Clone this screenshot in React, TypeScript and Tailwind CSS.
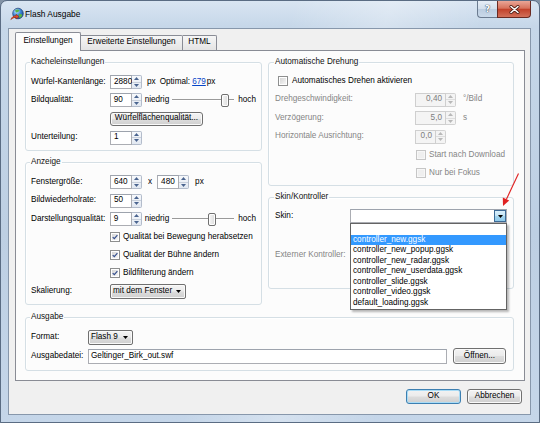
import React from "react";

const BTN_BG = "bg-[linear-gradient(#f3f3f3_0%,#ebebeb_48%,#dddddd_52%,#cfcfcf_100%)]";

function UpTri({ color }: { color: string }) {
  return (
    <svg width="5" height="3" viewBox="0 0 5 3">
      <path d="M0 3L2.5 0L5 3Z" fill={color} />
    </svg>
  );
}
function DownTri({ color = "#000" }: { color?: string }) {
  return (
    <svg width="5" height="3" viewBox="0 0 5 3">
      <path d="M0 0H5L2.5 3Z" fill={color} />
    </svg>
  );
}

function SpinArrows({ disabled }: { disabled?: boolean }) {
  const c = disabled ? "#b8b8b8" : "#4a648f";
  return (
    <div
      className={`w-[10px] h-full flex flex-col border border-l-0 rounded-r-[2px] ${
        disabled
          ? "border-[#d2d2d2] bg-[#f4f4f4]"
          : "border-[#b3bccb] bg-[linear-gradient(#f7f9fc,#e2e8f1)]"
      }`}
    >
      <div className="flex-1 flex items-center justify-center">
        <UpTri color={c} />
      </div>
      <div className={`h-px ${disabled ? "bg-[#dedede]" : "bg-[#c8d0dc]"}`} />
      <div className="flex-1 flex items-center justify-center">
        <DownTri color={c} />
      </div>
    </div>
  );
}

function Spin({
  value,
  w,
  disabled,
  right,
}: {
  value: string;
  w: string;
  disabled?: boolean;
  right?: boolean;
}) {
  return (
    <div className="flex h-[14px] shrink-0">
      <div
        className={`${w} h-full border flex items-center ${right ? "justify-end pr-[3px]" : "pl-[3px]"} ${
          disabled
            ? "border-[#cfcfcf] bg-[#f4f4f4] text-[#7d7d7d]"
            : "border-[#abadb3] border-t-[#9da3ad] bg-white"
        }`}
      >
        {value}
      </div>
      <SpinArrows disabled={disabled} />
    </div>
  );
}

function Check({ checked, disabled }: { checked?: boolean; disabled?: boolean }) {
  return (
    <div
      className={`w-[10px] h-[10px] shrink-0 border p-px ${
        disabled ? "border-[#c6c6c6] bg-[#f7f7f7]" : "border-[#8e8f8f] bg-white"
      }`}
    >
      <div
        className={`w-full h-full flex items-center justify-center ${
          disabled ? "bg-[#efefef]" : "bg-[linear-gradient(135deg,#d6d6d6,#f6f6f6)]"
        }`}
      >
        {checked && (
          <svg width="7" height="6" viewBox="0 0 7 6">
            <path d="M0.8 3.1L2.7 5L6.3 0.7" stroke="#36508e" strokeWidth="1.4" fill="none" />
          </svg>
        )}
      </div>
    </div>
  );
}

function Slider({ left }: { left: string }) {
  return (
    <div className="w-[62px] h-[14px] flex items-center shrink-0">
      <div className={`${left} h-[2px] border-t border-[#9a9a9a] bg-white`} />
      <div className="w-[8px] h-[13px] shrink-0 rounded-[2px] border border-[#707070] bg-[linear-gradient(90deg,#f6f6f6,#dcdcdc)] shadow-[inset_0_0_0_1px_#fdfdfd]" />
      <div className="flex-1 h-[2px] border-t border-[#9a9a9a] bg-white" />
    </div>
  );
}

function Select({ value, w }: { value: string; w: string }) {
  return (
    <div
      className={`${w} h-[15px] shrink-0 border border-[#707070] rounded-[2px] ${BTN_BG} shadow-[inset_0_0_0_1px_#f9f9f9] flex items-center pl-[2px] pr-[4px]`}
    >
      <span className="flex-1 whitespace-nowrap">{value}</span>
      <span className="ml-[3px] flex">
        <DownTri />
      </span>
    </div>
  );
}

function Button({ label, w, h, focus }: { label: string; w: string; h: string; focus?: boolean }) {
  return (
    <div
      className={`${w} ${h} shrink-0 border rounded-[3px] ${BTN_BG} flex items-center justify-center ${
        focus
          ? "border-[#3c7fb1] shadow-[inset_0_0_0_1px_#a9dcf6]"
          : "border-[#707070] shadow-[inset_0_0_0_1px_#fafafa]"
      }`}
    >
      {label}
    </div>
  );
}

function Group({
  title,
  children,
  cls,
}: {
  title: string;
  children: React.ReactNode;
  cls: string;
}) {
  return (
    <fieldset className={`min-w-0 border border-[#d5dfe5] rounded-[3px] shadow-[inset_1px_1px_0_#ffffff] ${cls}`}>
      <legend className="-ml-px px-[1px] h-[10px] leading-[10px] text-[#111111]">{title}</legend>
      {children}
    </fieldset>
  );
}

function AppIcon() {
  return (
    <svg width="14" height="14" viewBox="0 0 14 14">
      <defs>
        <radialGradient id="gl" cx="0.35" cy="0.3" r="0.8">
          <stop offset="0" stopColor="#bfe3ff" />
          <stop offset="0.5" stopColor="#3b86d6" />
          <stop offset="1" stopColor="#173f86" />
        </radialGradient>
      </defs>
      <circle cx="8" cy="6.5" r="5.3" fill="url(#gl)" stroke="#1b3c74" strokeWidth="0.7" />
      <path d="M5 3.6C6.4 2.2 8.2 2 9.6 3.2C9 4.6 7.6 5.3 6.2 5.4C5.6 5 5.2 4.4 5 3.6Z" fill="#58b546" />
      <path d="M8.6 7.3C10 6.8 11.6 7.1 12.4 7.9C11.8 9.6 10.6 10.8 9.5 11C9.4 9.8 8.9 8.6 8.6 7.3Z" fill="#58b546" />
      <path d="M0.8 12.6C2 9.8 3.8 8.6 6.2 8.6L6 7.2L9 9.6L6.2 12L6.1 10.4C4.2 10.4 2.5 11.2 0.8 12.6Z" fill="#e0502b" stroke="#8a2410" strokeWidth="0.5" />
    </svg>
  );
}

function RedArrow() {
  return (
    <svg className="absolute left-[498px] top-[170px] pointer-events-none" width="26" height="40" viewBox="0 0 26 40">
      <line x1="20.5" y1="3.5" x2="8.3" y2="29.5" stroke="#e02222" strokeWidth="1.1" />
      <path d="M5 36L4.8 27.6L11.2 30.6Z" fill="#e02222" />
    </svg>
  );
}

const items = [
  "controller_new.ggsk",
  "controller_new_popup.ggsk",
  "controller_new_radar.ggsk",
  "controller_new_userdata.ggsk",
  "controller_slide.ggsk",
  "controller_video.ggsk",
  "default_loading.ggsk",
];

export default function App() {
  const grey = "text-[#858585]";
  return (
    <div className="relative w-[540px] h-[423px] overflow-hidden bg-[#8393a6] font-['Liberation_Sans',Arial,sans-serif] text-[8.2px] leading-none text-black">
      <div className="w-full h-full flex flex-col rounded-t-[7px] border border-[#5a6c83] bg-[linear-gradient(105deg,rgba(255,255,255,0)_45%,rgba(255,255,255,0.28)_60%,rgba(255,255,255,0)_75%),linear-gradient(180deg,#d9e5f2_0%,#c6d7e9_6%,#bdcfe3_55%,#c5d6e9_100%)]">
        {/* title bar */}
        <div className="h-[27px] shrink-0 flex items-start">
          <div className="ml-[9px] mt-[6px]">
            <AppIcon />
          </div>
          <div className="ml-[1px] mt-[9px] text-[8.4px]">Flash Ausgabe</div>
          <div className="ml-auto mr-[8px] flex h-[17px]">
            <div className="w-[20px] h-full border border-r-0 border-t-0 border-[#6b7b90] rounded-bl-[4px] bg-[linear-gradient(#e6edf6_0%,#d3dfec_48%,#bccde0_52%,#cad9ea_100%)] flex items-center justify-center">
              <span className="font-['DejaVu_Sans',sans-serif] font-bold text-[9px] text-white [text-shadow:0_0_1px_#2d3e55,0_0_1px_#2d3e55]">?</span>
            </div>
            <div className="w-[34px] h-full border border-t-0 border-[#6a2a22] rounded-br-[4px] bg-[linear-gradient(#eaa697_0%,#d7725c_45%,#c2422b_52%,#d2705a_100%)] flex items-center justify-center">
              <svg width="11" height="9" viewBox="0 0 11 9">
                <path d="M2 1.5L9 7.5M9 1.5L2 7.5" stroke="#4a1a12" strokeWidth="3" strokeLinecap="round" />
                <path d="M2 1.5L9 7.5M9 1.5L2 7.5" stroke="#ffffff" strokeWidth="1.6" strokeLinecap="round" />
              </svg>
            </div>
          </div>
        </div>

        {/* client */}
        <div className="flex-1 ml-[7px] mr-[8px] mb-[7px] border border-[#8797ab] bg-[#f0f0f0] flex flex-col">
          {/* tabs */}
          <div className="mt-[3px] ml-[6px] h-[18px] flex items-start">
            <div className="relative z-10 w-[66px] h-[19px] border border-b-0 border-[#898c95] rounded-t-[2px] bg-[#fcfcfc] flex items-center justify-center pb-[2px]">
              Einstellungen
            </div>
            <div className="mt-[3px] w-[102px] h-[15px] border border-l-0 border-b-0 border-[#898c95] rounded-tr-[2px] bg-[linear-gradient(#f6f6f6,#e4e4e4)] flex items-center justify-center pb-[1px]">
              Erweiterte Einstellungen
            </div>
            <div className="mt-[3px] w-[34px] h-[15px] border border-l-0 border-b-0 border-[#898c95] rounded-tr-[2px] bg-[linear-gradient(#f6f6f6,#e4e4e4)] flex items-center justify-center pb-[1px]">
              HTML
            </div>
          </div>

          {/* panel */}
          <div className="ml-[6px] w-[510px] h-[331px] border border-[#898c95] bg-[#fcfcfc] pt-[6px] pl-[9px] pr-[10px] flex flex-col">
            <div className="flex gap-[6px] items-start">
              {/* left column */}
              <div className="w-[237px] flex flex-col gap-[6px]">
                <Group title="Kacheleinstellungen" cls="px-[5px] pb-[3px]">
                  <div className="pt-[6px]">
                    <div className="h-[18px] flex items-center">
                      <div className="w-[79px]">Würfel-Kantenlänge:</div>
                      <Spin value="2880" w="w-[22px]" />
                      <span className="ml-[5px]">px</span>
                      <span className="ml-[4px]">Optimal:</span>
                      <span className="ml-[2px] text-[#0645c8] underline">679</span>
                      <span className="ml-[1px]">px</span>
                    </div>
                    <div className="h-[18px] flex items-center">
                      <div className="w-[79px]">Bildqualität:</div>
                      <Spin value="90" w="w-[22px]" />
                      <span className="ml-[3px]">niedrig</span>
                      <div className="ml-[3px]">
                        <Slider left="w-[49px]" />
                      </div>
                      <span className="ml-[4px]">hoch</span>
                    </div>
                    <div className="h-[19px] flex items-center">
                      <div className="w-[79px]" />
                      <Button label="Würfelflächenqualität..." w="w-[93px]" h="h-[14px]" />
                    </div>
                    <div className="h-[19px] flex items-center">
                      <div className="w-[79px]">Unterteilung:</div>
                      <Spin value="1" w="w-[22px]" />
                    </div>
                  </div>
                </Group>

                <Group title="Anzeige" cls="px-[5px] pb-[3px]">
                  <div className="pt-[6px]">
                    <div className="h-[18px] flex items-center">
                      <div className="w-[79px]">Fenstergröße:</div>
                      <Spin value="640" w="w-[22px]" />
                      <span className="ml-[6px]">x</span>
                      <div className="ml-[5px]">
                        <Spin value="480" w="w-[22px]" />
                      </div>
                      <span className="ml-[6px]">px</span>
                    </div>
                    <div className="h-[19px] flex items-center">
                      <div className="w-[79px]">Bildwiederholrate:</div>
                      <Spin value="50" w="w-[22px]" />
                    </div>
                    <div className="h-[18px] flex items-center">
                      <div className="w-[79px]">Darstellungsqualität:</div>
                      <Spin value="9" w="w-[22px]" />
                      <span className="ml-[3px]">niedrig</span>
                      <div className="ml-[3px]">
                        <Slider left="w-[36px]" />
                      </div>
                      <span className="ml-[4px]">hoch</span>
                    </div>
                    <div className="h-[18px] flex items-center">
                      <div className="w-[79px]" />
                      <Check checked />
                      <span className="ml-[3px]">Qualität bei Bewegung herabsetzen</span>
                    </div>
                    <div className="h-[18px] flex items-center">
                      <div className="w-[79px]" />
                      <Check checked />
                      <span className="ml-[3px]">Qualität der Bühne ändern</span>
                    </div>
                    <div className="h-[18px] flex items-center">
                      <div className="w-[79px]" />
                      <Check checked />
                      <span className="ml-[3px]">Bildfilterung ändern</span>
                    </div>
                    <div className="h-[19px] flex items-center">
                      <div className="w-[79px]">Skalierung:</div>
                      <Select value="mit dem Fenster" w="w-[76px]" />
                    </div>
                  </div>
                </Group>
              </div>

              {/* right column */}
              <div className="w-[247px] flex flex-col gap-[6px]">
                <Group title="Automatische Drehung" cls="pl-[6px] pr-[5px] pb-[3px]">
                  <div className="pt-[5px]">
                    <div className="h-[18px] flex items-center">
                      <div className="ml-[3px]">
                        <Check />
                      </div>
                      <span className="ml-[4px]">Automatisches Drehen aktivieren</span>
                    </div>
                    <div className={`h-[19px] flex items-center ${grey}`}>
                      <div className="w-[140px]">Drehgeschwindigkeit:</div>
                      <Spin value="0,40" w="w-[31px]" disabled right />
                      <span className="ml-[7px]">°/Bild</span>
                    </div>
                    <div className={`h-[18px] flex items-center ${grey}`}>
                      <div className="w-[140px]">Verzögerung:</div>
                      <Spin value="5,0" w="w-[31px]" disabled right />
                      <span className="ml-[7px]">s</span>
                    </div>
                    <div className={`h-[19px] flex items-center ${grey}`}>
                      <div className="w-[140px]">Horizontale Ausrichtung:</div>
                      <Spin value="0,0" w="w-[21px]" disabled right />
                    </div>
                    <div className={`h-[18px] flex items-center ${grey}`}>
                      <div className="w-[141px]" />
                      <Check disabled />
                      <span className="ml-[3px]">Start nach Download</span>
                    </div>
                    <div className={`h-[18px] flex items-center ${grey}`}>
                      <div className="w-[141px]" />
                      <Check disabled />
                      <span className="ml-[3px]">Nur bei Fokus</span>
                    </div>
                  </div>
                </Group>

                <Group title="Skin/Kontroller" cls="pl-[6px] pr-[5px] pb-[24px]">
                  <div className="pt-[5px]">
                    <div className="h-[18px] flex items-center">
                      <div className="w-[75px]">Skin:</div>
                      <div className="relative w-[157px] h-[14px] border border-[#abadb3] border-t-[#9da3ad] bg-white flex justify-end">
                        <div className="w-[12px] h-full border border-[#3c6a96] bg-[linear-gradient(#d9effb_0%,#c2e4f6_48%,#a3d5f0_52%,#8ec9ea_100%)] flex items-center justify-center">
                          <DownTri />
                        </div>
                        <div className="absolute left-[-1px] top-[13px] z-20 w-[157px] border border-[#646464] bg-white shadow-[2px_2px_2px_rgba(0,0,0,0.28)] pb-[1px]">
                          <div className="h-[10.5px]" />
                          {items.map((it, i) => (
                            <div
                              key={it}
                              className={`h-[10.5px] flex items-center pl-[2px] ${
                                i === 0 ? "bg-[#3399ff] text-white" : "text-black"
                              }`}
                            >
                              {it}
                            </div>
                          ))}
                        </div>
                      </div>
                    </div>
                    <div className="h-[21px]" />
                    <div className={`h-[18px] flex items-center ${grey}`}>
                      <div className="w-[75px]">Externer Kontroller:</div>
                    </div>
                  </div>
                </Group>
              </div>
            </div>

            <Group title="Ausgabe" cls="mt-[7px] px-[5px] pb-[4px]">
              <div className="pt-[6px]">
                <div className="h-[18px] flex items-center">
                  <div className="w-[57px]">Format:</div>
                  <Select value="Flash 9" w="w-[45px]" />
                </div>
                <div className="h-[20px] flex items-center">
                  <div className="w-[57px]">Ausgabedatei:</div>
                  <div className="w-[359px] h-[15px] border border-[#abadb3] border-t-[#9da3ad] bg-white flex items-center pl-[2px]">
                    Geltinger_Birk_out.swf
                  </div>
                  <div className="ml-[6px]">
                    <Button label="Öffnen..." w="w-[53px]" h="h-[16px]" />
                  </div>
                </div>
              </div>
            </Group>
          </div>

          {/* bottom buttons */}
          <div className="mt-[8px] flex justify-end gap-[6px] pr-[8px]">
            <Button label="OK" w="w-[55px]" h="h-[15px]" focus />
            <Button label="Abbrechen" w="w-[55px]" h="h-[15px]" />
          </div>
        </div>
      </div>
      <RedArrow />
    </div>
  );
}
